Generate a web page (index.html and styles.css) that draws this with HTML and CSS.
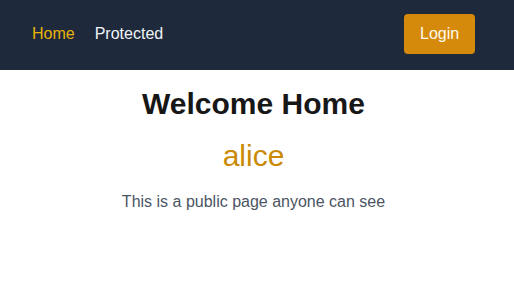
FILE: index.html
```html
<!DOCTYPE html>
<html lang="en">
<head>
<meta charset="utf-8">
<title>Home</title>
<link rel="stylesheet" href="styles.css">
</head>
<body>
<nav class="nav">
  <div class="nav-links">
    <a class="nav-link active" href="#">Home</a>
    <a class="nav-link" href="#">Protected</a>
  </div>
  <button class="login-btn" type="button">Login</button>
</nav>
<main class="main">
  <h1 class="title">Welcome Home</h1>
  <p class="user">alice</p>
  <p class="desc">This is a public page anyone can see</p>
</main>
</body>
</html>
```

FILE: styles.css
```css
* { box-sizing: border-box; }
html, body {
  margin: 0;
  padding: 0;
  background: #ffffff;
  font-family: "Liberation Sans", Arial, sans-serif;
}
.nav {
  height: 70px;
  background: #1e293b;
  display: flex;
  align-items: center;
  justify-content: space-between;
  padding: 14px 39px 16px 32px;
}
.nav-links {
  display: flex;
  gap: 20px;
}
.nav-link {
  color: #f1f5f9;
  text-decoration: none;
  font-size: 16px;
  line-height: 24px;
}
.nav-link.active {
  color: #eab308;
}
.login-btn {
  background: #d68a0b;
  color: #fffbeb;
  border: none;
  border-radius: 4px;
  font-family: inherit;
  font-size: 16px;
  line-height: 24px;
  padding: 8px 16px;
  height: 40px;
  width: 71px;
}
.main {
  padding: 16px 7px 0 0;
  text-align: center;
}
.title {
  margin: 0;
  font-size: 30px;
  line-height: 36px;
  font-weight: 700;
  color: #171717;
}
.user {
  margin: 16px 0 0;
  font-size: 30px;
  line-height: 36px;
  color: #ca8a04;
}
.desc {
  margin: 16px 0 0;
  font-size: 16px;
  line-height: 24px;
  color: #4b5563;
}
```
